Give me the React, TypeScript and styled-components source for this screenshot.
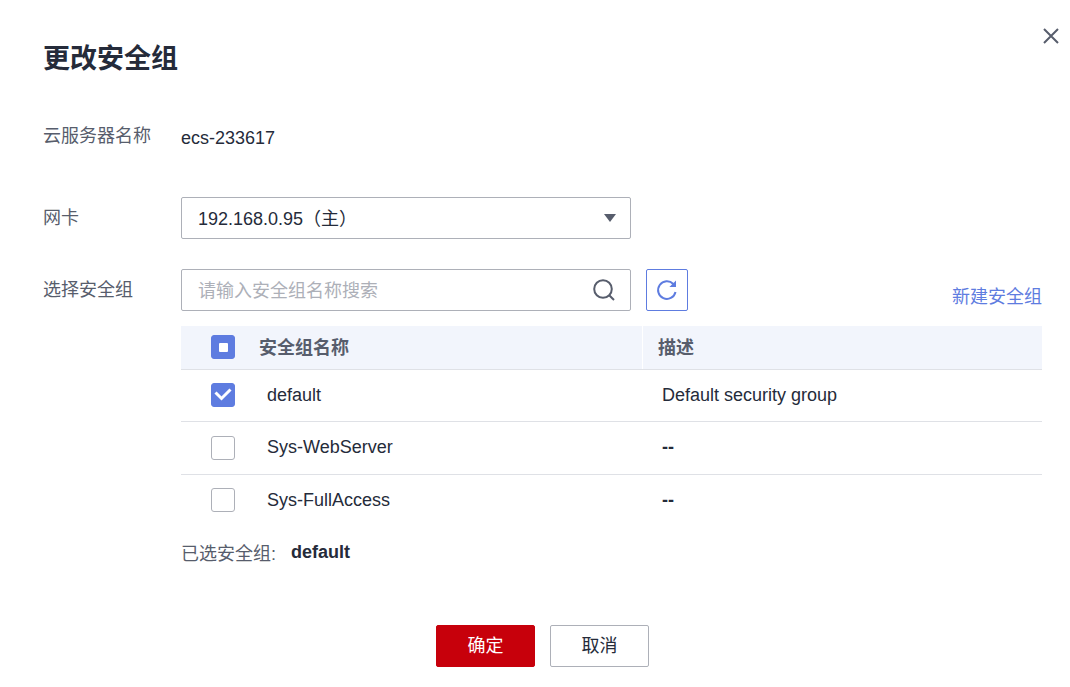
import React from 'react';
import styled, { createGlobalStyle } from 'styled-components';

const GlobalStyle = createGlobalStyle`
  html, body {
    margin: 0;
    padding: 0;
    background: #fff;
  }
  body {
    font-family: "Liberation Sans", "Noto Sans CJK SC", sans-serif;
    color: #252b3a;
  }
  * {
    box-sizing: border-box;
  }
`;

const Dialog = styled.div`
  position: relative;
  width: 1070px;
  height: 687px;
  padding: 39px 28px 0 43px;
  overflow: hidden;
`;

const CloseButton = styled.button`
  position: absolute;
  top: 27px;
  right: 10px;
  width: 18px;
  height: 18px;
  padding: 0;
  border: 0;
  background: none;
  color: #575d6c;
  svg {
    display: block;
  }
`;

const Title = styled.h2`
  margin: 0 0 38px;
  font-size: 27px;
  line-height: 40px;
  font-weight: 700;
  color: #252b3a;
`;

const FormRow = styled.div<{ $gap: number }>`
  display: grid;
  grid-template-columns: 138px 1fr;
  margin-bottom: ${(props) => props.$gap}px;
`;

const Label = styled.div<{ $tight?: boolean }>`
  font-size: 18px;
  line-height: ${(props) => (props.$tight ? 38 : 42)}px;
  color: #575d6c;
`;

const Value = styled.div`
  font-size: 18px;
  line-height: 42px;
  color: #252b3a;
`;

const Field = styled.div`
  display: flex;
  align-items: center;
  justify-content: space-between;
  width: 450px;
  height: 42px;
  padding: 0 15px 0 16px;
  border: 1px solid #adb0b8;
  border-radius: 2px;
  font-size: 18px;
  color: #252b3a;
  background: #fff;
`;

const FieldText = styled.span<{ $placeholder?: boolean }>`
  margin-bottom: 2px;
  color: ${(props) => (props.$placeholder ? '#adb0b8' : '#252b3a')};
`;

const Caret = styled.span`
  width: 0;
  height: 0;
  margin-right: -1px;
  border-left: 6px solid transparent;
  border-right: 6px solid transparent;
  border-top: 8px solid #575d6c;
`;

const Toolbar = styled.div`
  display: flex;
  margin-bottom: 15px;
`;

const RefreshButton = styled.button`
  display: flex;
  align-items: center;
  justify-content: center;
  width: 42px;
  height: 42px;
  margin-left: 15px;
  padding: 0;
  border: 1px solid #5e7ce0;
  border-radius: 2px;
  background: #fff;
  color: #5e7ce0;
`;

const CreateLink = styled.a`
  align-self: flex-end;
  margin-left: auto;
  font-size: 18px;
  line-height: 28px;
  color: #5e7ce0;
`;

const Table = styled.div`
  width: 861px;
`;

const HeadRow = styled.div`
  display: grid;
  grid-template-columns: 462px 1fr;
  height: 43.7px;
  background: #f2f5fc;
  border-bottom: 1px solid #dfe1e6;
  font-size: 18px;
  font-weight: 700;
  color: #575d6c;
`;

const HeadText = styled.span`
  margin-bottom: 3px;
`;

const BodyRow = styled.div<{ $last?: boolean }>`
  display: grid;
  grid-template-columns: 462px 1fr;
  height: 52.5px;
  border-bottom: 1px solid ${(props) => (props.$last ? 'transparent' : '#dfe1e6')};
  font-size: 18px;
  color: #252b3a;
`;

const NameCell = styled.div<{ $head?: boolean }>`
  display: flex;
  align-items: center;
  gap: ${(props) => (props.$head ? 24 : 32)}px;
  padding-left: 30px;
  border-right: ${(props) => (props.$head ? '1px solid #fff' : 'none')};
`;

const DescCell = styled.div<{ $head?: boolean; $empty?: boolean }>`
  display: flex;
  align-items: center;
  padding-left: ${(props) => (props.$head ? 15 : 19)}px;
  font-weight: ${(props) => (props.$head || props.$empty ? 700 : 400)};
`;

const Check = styled.span<{ $on?: boolean }>`
  display: flex;
  align-items: center;
  justify-content: center;
  flex: none;
  width: 24px;
  height: 24px;
  border-radius: 3px;
  border: 1px solid ${(props) => (props.$on ? '#5e7ce0' : '#adb0b8')};
  background: ${(props) => (props.$on ? '#5e7ce0' : '#fff')};
`;

const HalfMark = styled.span`
  width: 9px;
  height: 9px;
  border-radius: 1px;
  background: #fff;
`;

const Summary = styled.div`
  display: flex;
  margin-top: 9px;
  font-size: 18px;
  line-height: 36px;
  color: #575d6c;
  strong {
    margin-left: 15px;
    line-height: 32px;
    color: #252b3a;
    font-weight: 700;
  }
`;

const Footer = styled.div`
  display: flex;
  justify-content: center;
  gap: 15px;
  margin-top: 53px;
`;

const Button = styled.button<{ $primary?: boolean }>`
  width: 99px;
  height: 42px;
  padding: 0 0 4px;
  border: 1px solid ${(props) => (props.$primary ? '#c7000b' : '#adb0b8')};
  border-radius: 2px;
  background: ${(props) => (props.$primary ? '#c7000b' : '#fff')};
  color: ${(props) => (props.$primary ? '#fff' : '#252b3a')};
  font-family: inherit;
  font-size: 18px;
`;

const groups = [
  { name: 'default', desc: 'Default security group', checked: true },
  { name: 'Sys-WebServer', desc: '--', checked: false },
  { name: 'Sys-FullAccess', desc: '--', checked: false },
];

export default function App() {
  return (
    <>
      <GlobalStyle />
      <Dialog>
        <CloseButton aria-label="关闭">
          <svg width="18" height="18" viewBox="0 0 18 18" fill="none" stroke="currentColor" strokeWidth="2">
            <path d="M2 2l14 14M16 2L2 16" />
          </svg>
        </CloseButton>
        <Title>更改安全组</Title>

        <FormRow $gap={38}>
          <Label $tight>云服务器名称</Label>
          <Value>ecs-233617</Value>
        </FormRow>

        <FormRow $gap={30}>
          <Label>网卡</Label>
          <Field>
            <FieldText>192.168.0.95（主）</FieldText>
            <Caret />
          </Field>
        </FormRow>

        <FormRow $gap={0}>
          <Label>选择安全组</Label>
          <div>
            <Toolbar>
              <Field>
                <FieldText $placeholder>请输入安全组名称搜索</FieldText>
                <svg width="22" height="22" viewBox="0 0 22 22" fill="none" stroke="#575d6c" strokeWidth="2">
                  <circle cx="10" cy="10" r="8.8" />
                  <path d="M16.2 16.2L21 21" />
                </svg>
              </Field>
              <RefreshButton aria-label="刷新">
                <svg width="22" height="22" viewBox="0 0 22 22" fill="none" stroke="currentColor" strokeWidth="2">
                  <path d="M19.5 13a8.8 8.8 0 1 1-2.2-8" />
                  <path d="M20 1.5v6.6h-6.6z" fill="currentColor" stroke="none" />
                </svg>
              </RefreshButton>
              <CreateLink>新建安全组</CreateLink>
            </Toolbar>

            <Table>
              <HeadRow>
                <NameCell $head>
                  <Check $on>
                    <HalfMark />
                  </Check>
                  <HeadText>安全组名称</HeadText>
                </NameCell>
                <DescCell $head>
                  <HeadText>描述</HeadText>
                </DescCell>
              </HeadRow>
              {groups.map((group, index) => (
                <BodyRow key={group.name} $last={index === groups.length - 1}>
                  <NameCell>
                    <Check $on={group.checked}>
                      {group.checked && (
                        <svg width="18" height="14" viewBox="0 0 18 14" fill="none" stroke="#fff" strokeWidth="3">
                          <path d="M1.5 4.5L7.5 10.5L16.5 1.5" />
                        </svg>
                      )}
                    </Check>
                    {group.name}
                  </NameCell>
                  <DescCell $empty={group.desc === '--'}>{group.desc}</DescCell>
                </BodyRow>
              ))}
            </Table>

            <Summary>
              已选安全组:
              <strong>default</strong>
            </Summary>
          </div>
        </FormRow>

        <Footer>
          <Button $primary>确定</Button>
          <Button>取消</Button>
        </Footer>
      </Dialog>
    </>
  );
}
